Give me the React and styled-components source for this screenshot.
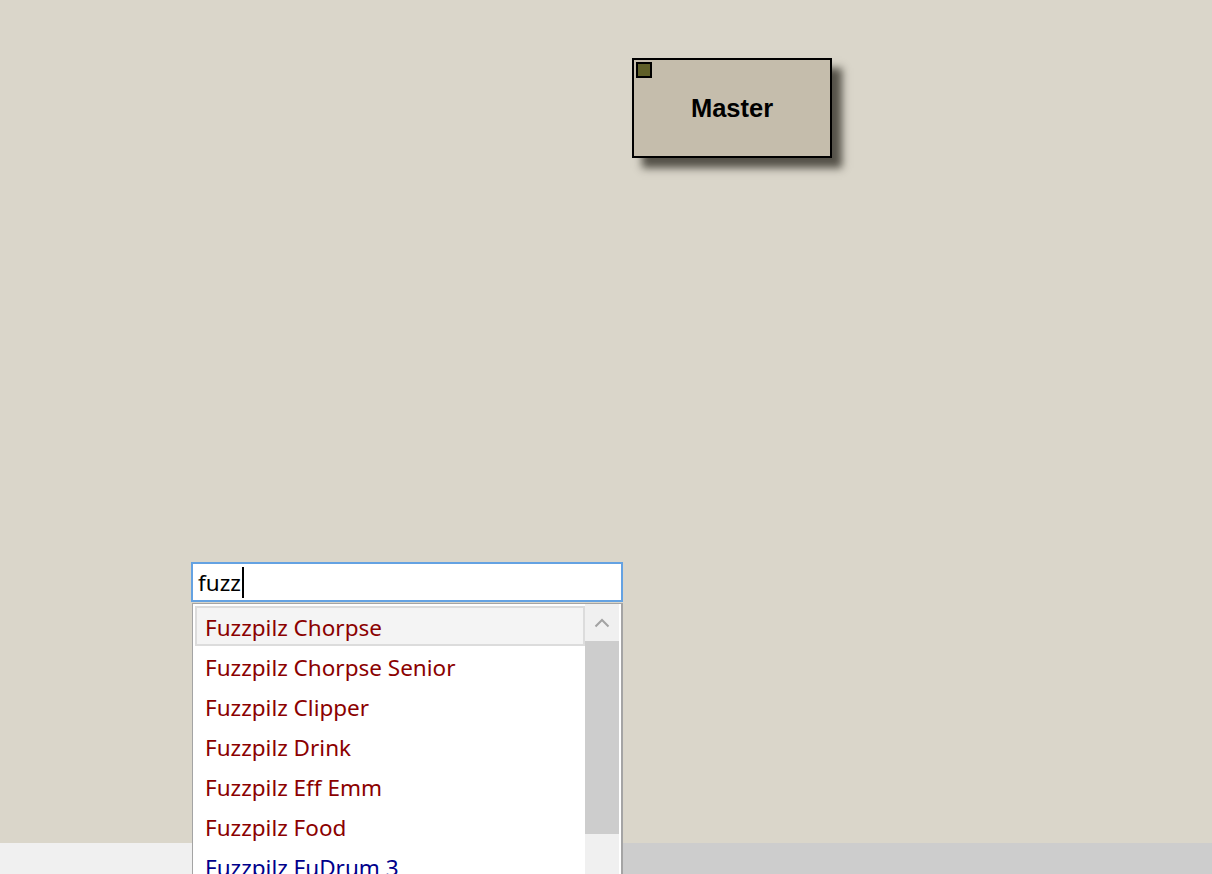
import styled, { createGlobalStyle } from "styled-components";

const GlobalStyle = createGlobalStyle`
  html, body {
    margin: 0;
    padding: 0;
    overflow: hidden;
  }
`;

const Page = styled.div`
  width: 1212px;
  height: 874px;
  display: flex;
  flex-direction: column;
  background: #dad6ca;
`;

const Canvas = styled.div`
  position: relative;
  flex: 1;
`;

const Node = styled.div`
  position: absolute;
  left: ${(p) => p.x}px;
  top: ${(p) => p.y}px;
  width: 200px;
  height: 100px;
  box-sizing: border-box;
  border: 2px solid #000;
  background: #c5bdac;
  box-shadow: 10px 10px 8px rgba(40, 38, 30, 0.75);
  display: flex;
  align-items: center;
  justify-content: center;
  font-family: "Liberation Sans", Arial, sans-serif;
  font-weight: bold;
  font-size: 25.5px;
  color: #000;
`;

const Port = styled.span`
  position: absolute;
  left: 2px;
  top: 2px;
  width: 16px;
  height: 16px;
  box-sizing: border-box;
  border: 2px solid #000;
  background: #5f5f28;
`;

const Search = styled.div`
  position: absolute;
  left: 191px;
  top: 562px;
  width: 432px;
  z-index: 2;
  font-family: "Noto Sans", "Open Sans", sans-serif;
  font-size: 22.5px;
`;

const InputBox = styled.div`
  height: 40px;
  box-sizing: border-box;
  border: 2px solid #64a2e2;
  background: #fff;
  display: flex;
  align-items: center;
  padding-left: 5px;
  color: #000;
`;

const Caret = styled.span`
  display: inline-block;
  width: 2px;
  height: 31px;
  background: #000;
  margin-left: 1px;
`;

const Popup = styled.div`
  margin-top: 1px;
  margin-left: 1px;
  width: 431px;
  height: 400px;
  box-sizing: border-box;
  border: 1px solid #a4a4a4;
  border-right-width: 2px;
  background: #fff;
  display: flex;
  overflow: hidden;
`;

const List = styled.ul`
  flex: 1;
  margin: 0;
  padding: 2px 0 0 2px;
  list-style: none;
`;

const Item = styled.li`
  height: 40px;
  box-sizing: border-box;
  display: flex;
  align-items: center;
  padding: 2px 0 0 8px;
  border: 2px solid ${(p) => (p.$active ? "#dcdcdc" : "transparent")};
  background: ${(p) => (p.$active ? "#f4f4f4" : "transparent")};
  color: ${(p) => (p.$kind === "blue" ? "#00008b" : "#8b0000")};
  white-space: nowrap;
`;

const VScroll = styled.div`
  width: 34px;
  margin-right: 2px;
  background: #f0f0f0;
  display: flex;
  flex-direction: column;
`;

const ArrowBtn = styled.div`
  height: 37px;
  display: flex;
  align-items: center;
  justify-content: center;
`;

const VThumb = styled.div`
  height: 193px;
  background: #cdcdcd;
`;

const HScroll = styled.div`
  height: 31px;
  background: #f0f0f0;
  display: flex;
`;

const HThumb = styled.div`
  margin-left: ${(p) => p.$offset}px;
  flex: 1;
  background: #cdcdcd;
`;

const items = [
  { name: "Fuzzpilz Chorpse", kind: "red" },
  { name: "Fuzzpilz Chorpse Senior", kind: "red" },
  { name: "Fuzzpilz Clipper", kind: "red" },
  { name: "Fuzzpilz Drink", kind: "red" },
  { name: "Fuzzpilz Eff Emm", kind: "red" },
  { name: "Fuzzpilz Food", kind: "red" },
  { name: "Fuzzpilz FuDrum 3", kind: "blue" },
];

export default function App() {
  return (
    <>
      <GlobalStyle />
      <Page>
        <Canvas>
          <Node x={632} y={58}>
            <Port />
            Master
          </Node>

          <Search>
            <InputBox>
              fuzz
              <Caret />
            </InputBox>
            <Popup>
              <List>
                {items.map((it, i) => (
                  <Item key={it.name} $active={i === 0} $kind={it.kind}>
                    {it.name}
                  </Item>
                ))}
              </List>
              <VScroll>
                <ArrowBtn>
                  <svg width="16" height="10" viewBox="0 0 16 10">
                    <polyline
                      points="1.5,8.5 8,2 14.5,8.5"
                      fill="none"
                      stroke="#a3a3a3"
                      strokeWidth="2"
                    />
                  </svg>
                </ArrowBtn>
                <VThumb />
              </VScroll>
            </Popup>
          </Search>
        </Canvas>
        <HScroll>
          <HThumb $offset={420} />
        </HScroll>
      </Page>
    </>
  );
}
